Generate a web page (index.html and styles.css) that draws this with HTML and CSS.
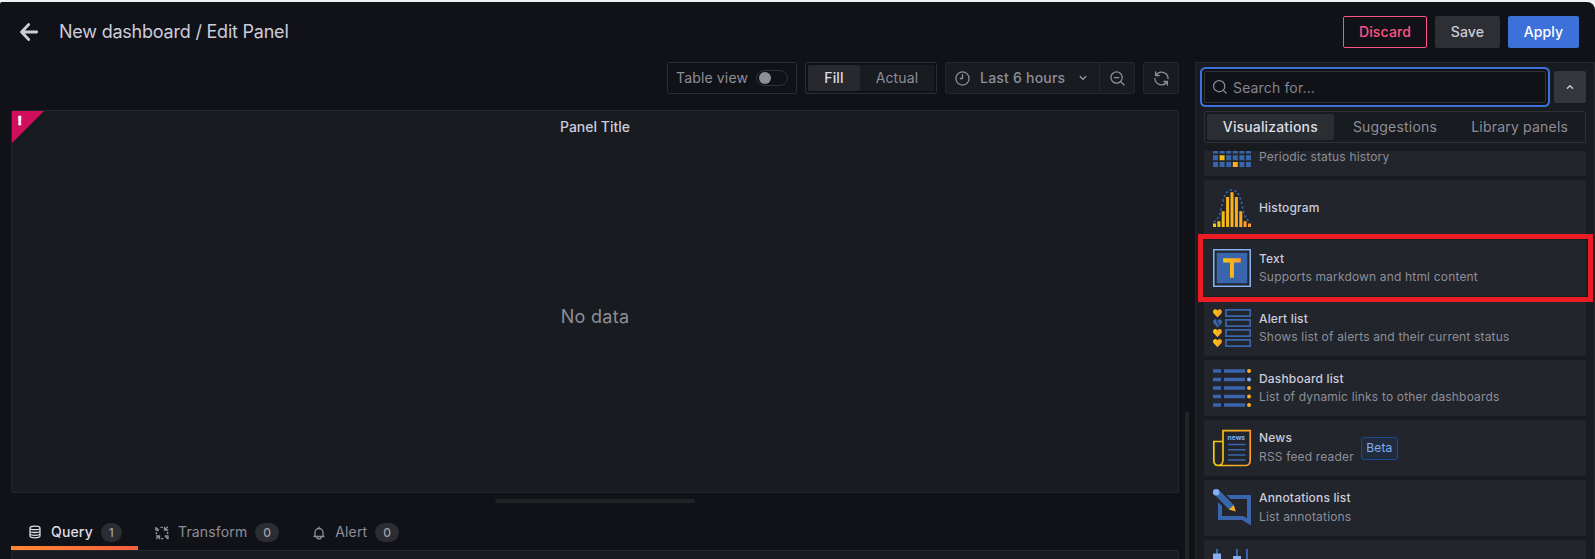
FILE: index.html
```html
<!DOCTYPE html>
<html lang="en">
<head>
<meta charset="utf-8">
<title>New dashboard / Edit Panel</title>
<link rel="stylesheet" href="styles.css">
</head>
<body>
<div class="app">
  <header class="topbar">
    <svg class="back" viewBox="0 0 18 18"><path d="M16.700 9H1.800M8.700 1.600 1.500 9l7.200 7.400"/></svg>
    <h1 class="title">New dashboard / Edit Panel</h1>
    <div class="actions">
      <button class="btn discard">Discard</button>
      <button class="btn save">Save</button>
      <button class="btn apply">Apply</button>
    </div>
  </header>
  <div class="body">
    <main class="main">
      <div class="toolbar">
        <div class="box tableview"><span>Table view</span><span class="switch"></span></div>
        <div class="box radio"><span class="opt on">Fill</span><span class="opt">Actual</span></div>
        <div class="box time">
          <div class="range">
            <svg class="ic" viewBox="0 0 16 16"><circle cx="8" cy="8" r="7"/><path d="M8 4v4H5.600"/></svg>
            <span>Last 6 hours</span>
            <svg class="chev" viewBox="0 0 10 6"><path d="M1.500 1.200 5 4.700l3.500-3.500"/></svg>
          </div>
          <div class="zoomout"><svg class="ic" viewBox="0 0 16 16"><circle cx="7" cy="7" r="6"/><path d="M11.500 11.500 15 15M4.600 7h4.800"/></svg></div>
        </div>
        <div class="box refresh"><svg class="ic" viewBox="0 0 16 16"><path d="M1.700 1v3.800h3.800M2 4.700A7 7 0 0 1 15 8M14.300 15v-3.800h-3.800M14 11.300A7 7 0 0 1 1 8"/></svg></div>
      </div>
      <section class="panel">
        <div class="corner">!</div>
        <div class="ptitle">Panel Title</div>
        <div class="nodata">No data</div>
      </section>
      <div class="handle"></div>
      <nav class="tabs">
        <div class="tab active">
          <svg class="tic" viewBox="0 0 14 14"><path d="M2 3c0-2.400 10-2.400 10 0v8c0 2.400-10 2.400-10 0zM2 3.200c0 2 10 2 10 0M2 6c0 2 10 2 10 0M2 8.800c0 2 10 2 10 0"/></svg>
          <span>Query</span><b class="count">1</b>
        </div>
        <div class="tab">
          <svg class="tic" viewBox="0 0 14 14"><path d="M.8 4.500V1.200M1 1.400l2.800 2.800M1.200 4.300h2.700M9.500.8v3.200h3.700M12.800.8 9.800 3.800M13 9.600v3.600M12.800 12.800l-2.800-2.800M9.700 9.900h3.500M4.500 13.200V10H1M1.200 13l3-3M5.500 1.400h2.300M6 12.600h2.300M1.400 6v2.300M12.600 5.800v2.300"/></svg>
          <span>Transform</span><b class="count">0</b>
        </div>
        <div class="tab">
          <svg class="tic" viewBox="0 0 14 14"><path d="M1.500 10.500h11M3 10.300V6.500a4 4 0 0 1 8 0v3.800M7 2.300V.6M4.800 11c.2 2.600 4.200 2.600 4.400 0"/></svg>
          <span>Alert</span><b class="count">0</b>
        </div>
      </nav>
      <div class="content"></div>
    </main>
    <div class="splitter"><i></i></div>
    <aside class="side">
      <div class="searchrow">
        <div class="search">
          <svg class="sic" viewBox="0 0 14 14"><circle cx="6.200" cy="6.200" r="5.600"/><path d="m10.300 10.300 3.200 3.200"/></svg>
          <span>Search for...</span>
        </div>
        <div class="collapse"><svg class="chev" viewBox="0 0 10 6"><path d="M1.700 4.700 5 1.500l3.300 3.200"/></svg></div>
      </div>
      <div class="vtabs"><span class="vtab on">Visualizations</span><span class="vtab">Suggestions</span><span class="vtab">Library panels</span></div>
      <div class="list">
        <svg width="0" height="0" class="defs"><defs>
          <linearGradient id="gold" gradientUnits="userSpaceOnUse" x1="0" y1="0" x2="38" y2="0"><stop offset="0" stop-color="#f2cc0c"/><stop offset="1" stop-color="#ff9830"/></linearGradient>
          <linearGradient id="warm" x1="0" y1="0" x2="1" y2="0"><stop offset="0" stop-color="#f2cc0c"/><stop offset="1" stop-color="#ff9830"/></linearGradient>
          <path id="heart" d="M4.500 9 .7 5C-.8 3 .6.6 2.500.8 3.600.9 4.100 1.500 4.500 2.200 4.900 1.500 5.400.9 6.500.8 8.400.6 9.800 3 8.300 5z"/>
        </defs></svg>
        <div class="card first">
          <svg class="viz" viewBox="0 0 38 38">
            <path class="blue" d="M0 6h5v5H0zM6.600 6h5v5h-5zM13.200 6h5v5h-5zM19.800 6h5v5h-5zM26.400 6h5v5h-5zM33 6h5v5h-5zM0 12.700h5v5H0zM6.600 12.700h5v5h-5zM13.200 12.700h5v5h-5zM19.800 12.700h5v5h-5zM26.400 12.700h5v5h-5zM33 12.700h5v5h-5zM0 19.400h5v5H0zM6.600 19.400h5v5h-5zM13.200 19.400h5v5h-5zM19.800 19.400h5v5h-5zM26.400 19.400h5v5h-5zM33 19.400h5v5h-5zM0 26.200h5v5H0zM13.200 26.200h5v5h-5zM19.800 26.200h5v5h-5zM26.400 26.200h5v5h-5zM33 26.200h5v5h-5zM0 33h5v5H0zM6.600 33h5v5h-5zM13.200 33h5v5h-5zM26.400 33h5v5h-5zM33 33h5v5h-5z"/>
            <path class="gold" d="M6.600 26.200h5v5h-5zM19.800 33h5v5h-5z"/>
          </svg>
          <div class="txt"><span>Periodic status history</span></div>
        </div>
        <div class="card">
          <svg class="viz" viewBox="0 0 38 38">
            <path class="gold" d="M0 34.500h3V38H0zM4.400 32.300h3V38h-3zM8.700 22.300h3V38h-3zM13.100 8h3v30h-3zM17.500 3.300h3V38h-3zM21.900 8h3v30h-3zM26.300 22.300h3V38h-3zM30.600 32.300h3V38h-3zM35 34.500h3V38h-3z"/>
            <path class="curve" d="M.6 33C8 29 7.500 20 10 12 12 4 15 1 19 1s7 3 9 11c2.500 8 2 17 9.400 21"/>
          </svg>
          <div class="txt"><strong>Histogram</strong></div>
        </div>
        <div class="card marked">
          <svg class="viz" viewBox="0 0 38 38">
            <path fill="none" stroke="#84aff1" stroke-width="1.600" d="M.8.8h36.400v36.400H.8z"/><path class="blue" d="M3.700 3.700h30.600v30.600H3.700z"/><path class="warm" d="M10.200 9.200h17.600v4.300h-6.800v15.300h-4V13.500h-6.800z"/>
          </svg>
          <div class="txt"><strong>Text</strong><span>Supports markdown and html content</span></div>
        </div>
        <div class="card">
          <svg class="viz" viewBox="0 0 38 38">
            <use href="#heart" fill="url(#warm)" y="-.6"/><use href="#heart" fill="#3865ab" y="9.400"/><use href="#heart" fill="url(#warm)" y="19.300"/><use href="#heart" fill="url(#warm)" y="29.200"/>
            <path stroke="#22252b" fill="none" d="m4.500 10.500-.8 2.500 2 1-1 2"/>
            <path fill="none" stroke="#3865ab" stroke-width="1.700" d="M12.900.8h24.300v6.400H12.900zM12.900 10.800h24.300v6.400H12.900zM12.900 20.800h24.300v6.400H12.900zM12.900 30.800h24.300v6.400H12.900z"/>
          </svg>
          <div class="txt"><strong>Alert list</strong><span>Shows list of alerts and their current status</span></div>
        </div>
        <div class="card">
          <svg class="viz" viewBox="0 0 38 38">
            <path class="blue" d="M0 .2h8v3.600H0zM11 .2h21v3.600H11zM0 8.700h8v3.600H0zM11 8.700h21v3.600H11zM0 17.200h8v3.600H0zM11 17.200h21v3.600H11zM0 25.700h8v3.600H0zM11 25.700h21v3.600H11zM0 34.200h8v3.600H0zM11 34.200h21v3.600H11z"/>
            <g fill="#fdb022"><circle cx="36" cy="2" r="2"/><circle cx="36" cy="10.500" r="2" fill="#84aff1"/><circle cx="36" cy="19" r="2"/><circle cx="36" cy="27.500" r="2"/><circle cx="36" cy="36" r="2"/></g>
          </svg>
          <div class="txt"><strong>Dashboard list</strong><span>List of dynamic links to other dashboards</span></div>
        </div>
        <div class="card news">
          <svg class="viz" viewBox="0 0 38 38">
            <path fill="none" stroke="url(#gold)" stroke-width="1.700" d="M10 31.500V1.700h27.200v29.800c0 3-2 5-4.500 5H5c-2.500 0-4.200-2-4.200-5V12.500H10M10 31c0 3-2 5.500-5 5.500"/>
            <path stroke="#3865ab" stroke-width="1.500" d="M15 15.600h17.500M15 20.800h17.500M15 25.900h17.500M15 31h17.500"/>
            <text x="14.600" y="11" textLength="17.500" lengthAdjust="spacingAndGlyphs">news</text>
          </svg>
          <div class="txt spread"><strong>News</strong><span>RSS feed reader</span></div><em class="beta">Beta</em>
        </div>
        <div class="card">
          <svg class="viz" viewBox="0 0 38 38">
            <path class="blue" d="M13.500 6H38v30.500L29 31H5V13l4 4v10h21.500l3.500 2.200V10H17.500z"/>
            <path class="blue" d="m2 6 4.400-4.400 14.400 14.400-4.900 4.500z"/><circle cx="3.200" cy="3.200" r="3.300" fill="#84aff1"/><path class="warm" d="m15.900 20.500 4.900-4.500 2 6.500z"/>
          </svg>
          <div class="txt spread"><strong>Annotations list</strong><span>List annotations</span></div>
        </div>
        <div class="card">
          <svg class="viz" viewBox="0 0 38 38">
            <path class="blue" d="M3 0h2v38H3zM23 0h2v38h-2zM33 0h2v38h-2z"/><path fill="#84aff1" d="M0 4.500h8v20H0zM20 7h8v16h-8z"/>
          </svg>
        </div>
      </div>
    </aside>
  </div>
</div>
</body>
</html>
```
FILE: styles.css
```css
*, *::before, *::after { box-sizing: border-box; }
body { margin: 0; padding-top: 2px; height: 559px; overflow: hidden; background: #f0f2f5; font: 14px/22px Inter, Roboto, sans-serif; letter-spacing: 0.15px; color: #ccccdc; }
svg { flex: none; overflow: visible; }
.app { height: 557px; overflow: hidden; background: #111217; border-radius: 2px 8px 0 0; display: flex; flex-direction: column; }
.topbar { flex: none; height: 60px; display: flex; align-items: center; padding: 0 16px 0 20px; }
.back { width: 18px; height: 18px; fill: none; stroke: #ccccdc; stroke-width: 2.8; stroke-linecap: round; stroke-linejoin: round; }
.title { margin: 0 0 0 21px; font-size: 18px; line-height: 22px; font-weight: 400; letter-spacing: -0.22px; }
.actions { margin-left: auto; display: flex; gap: 8px; }
.btn { height: 32px; padding: 0; border: 0; border-radius: 2px; font: 500 14px/30px Inter, sans-serif; letter-spacing: 0.15px; color: #ccccdc; }
.discard { width: 84px; background: transparent; border: 1px solid #ff5286; color: #ff5286; }
.save { width: 65px; background: #2e2e35; }
.apply { width: 71px; background: #3d71d9; color: #fff; }
.body { flex: 1; min-height: 0; display: flex; }
.main { flex: none; width: 1179px; padding-left: 11px; display: flex; flex-direction: column; }
.toolbar { flex: none; height: 48px; display: flex; justify-content: flex-end; align-items: flex-start; gap: 8px; color: #8e8e99; }
.box { height: 32px; display: flex; align-items: center; border: 1px solid #2c2e34; border-radius: 2px; }
.tableview { width: 130px; padding-left: 8px; gap: 8px; }
.switch { width: 32px; height: 16px; border: 1px solid #303239; border-radius: 8px; padding: 1px 2px; }
.switch::before { content: ""; display: block; width: 12px; height: 12px; border-radius: 6px; background: #8e8e99; }
.radio { width: 132px; padding: 2px; }
.opt { height: 26px; line-height: 26px; flex: 1; text-align: center; background: #181b1f; }
.opt.on { flex: none; width: 52px; background: #28292e; color: #dcdce8; font-weight: 500; border-radius: 2px; }
.time { width: 190px; background: #181b1f; border-color: #25272c; font-weight: 500; }
.range { width: 154px; height: 30px; display: flex; align-items: center; padding-left: 9px; border-right: 1px solid #25272c; }
.range span { margin-left: 10px; width: 85px; letter-spacing: 0.22px; white-space: nowrap; }
.ic { width: 15px; height: 15px; fill: none; stroke: #8e8e99; stroke-width: 1.4; stroke-linecap: round; stroke-linejoin: round; }
.chev { width: 8px; height: 6px; fill: none; stroke: #9b9ba7; stroke-width: 1.7; stroke-linecap: round; stroke-linejoin: round; }
.range .chev { margin-left: 14px; }
.zoomout { flex: 1; display: flex; justify-content: center; }
.refresh { width: 36px; justify-content: center; background: #181b1f; border-color: #25272c; }
.panel { flex: none; position: relative; height: 383px; background: #181b1f; border: 1px solid #25272c; border-radius: 2px; display: flex; flex-direction: column; align-items: center; }
.corner { position: absolute; left: 0; top: 0; width: 32px; height: 32px; padding-left: 5px; background: #d10e5c; clip-path: polygon(0 0, 100% 0, 0 100%); color: #fff; font: 900 12px/20px "DejaVu Sans", sans-serif; -webkit-text-stroke: 0.6px #fff; }
.ptitle { margin-top: 5px; font-weight: 500; letter-spacing: 0; }
.nodata { margin: auto; padding-top: 4px; font-size: 18px; letter-spacing: 0.3px; color: #8e8e99; }
.handle { flex: none; width: 200px; height: 4px; margin: 6px 0 0 484px; background: #202226; border-radius: 4px; }
.tabs { flex: none; height: 47px; padding-top: 12px; display: flex; color: #8e8e99; }
.tab { height: 35px; padding: 0 16px 0 17px; display: flex; align-items: center; }
.tab span { padding-bottom: 1px; }
.tab.active { width: 127px; color: #dcdce8; font-weight: 500; border-bottom: 4px solid; border-image: linear-gradient(90deg, #ff8833, #f55f3e) 1; padding-top: 3px; }
.tic { width: 14px; height: 14px; margin-right: 9px; fill: none; stroke: currentColor; stroke-width: 1.3; }
.count { margin-left: 8px; height: 19px; line-height: 19px; padding: 0 8px; border-radius: 10px; background: #2c2d33; color: #a0a0ac; font-size: 12px; font-weight: 500; }
.content { flex: 1; border: 1px solid #25272c; border-bottom: 0; border-radius: 2px 2px 0 0; background: #181b1f; }
.splitter { flex: none; width: 16px; padding: 349px 0 0 6px; }
.splitter i { display: block; width: 4px; height: 200px; border-radius: 4px; background: #202226; }
.side { flex: none; width: 400px; background: #181b1f; border: 1px solid #25272c; border-bottom: 0; padding: 8px 8px 0; display: flex; flex-direction: column; }
.searchrow { flex: none; display: flex; gap: 8px; }
.search { width: 342px; height: 32px; display: flex; align-items: center; padding-left: 8px; background: #111217; border: 1px solid #303238; border-radius: 2px; box-shadow: 0 0 0 2px #111217, 0 0 0 4px #3d71d9; color: #85858f; }
.search span { padding-top: 2px; }
.sic { width: 14px; height: 14px; margin-right: 6px; fill: none; stroke: #8e8e99; stroke-width: 1.2; }
.collapse { width: 32px; height: 32px; background: #34363c; border-radius: 2px; display: flex; align-items: center; justify-content: center; }
.collapse .chev { stroke: #ccccdc; }
.vtabs { flex: none; height: 32px; margin-top: 8px; padding: 2px; display: flex; border: 1px solid #2f3136; border-radius: 2px; color: #8e8e99; }
.vtab { width: 123px; height: 26px; line-height: 26px; text-align: center; letter-spacing: 0.2px; }
.vtab.on { width: 127px; background: #2a2d31; color: #dcdce8; font-weight: 500; border-radius: 2px; letter-spacing: 0.15px; }
.vtab:last-child { width: 127px; }
.list { margin: 8px -8px 0; padding: 0 8px; height: 408px; overflow: clip; display: flex; flex-direction: column; gap: 4px; }
.defs { position: absolute; }
.card { flex: none; position: relative; height: 56px; display: flex; align-items: center; padding: 0 9px; background: #22252b; border-radius: 2px; }
.first { margin-top: -31px; }
.first .txt { padding-top: 18px; }
.viz { width: 38px; height: 38px; margin-right: 8px; }
.txt { display: flex; flex-direction: column; font-size: 12px; line-height: 18px; letter-spacing: 0.17px; color: #8e8e99; white-space: nowrap; }
.txt strong { font-weight: 500; color: #ccccdc; }
.spread strong { margin-bottom: 1px; }
.spread { padding-bottom: 1px; }
.marked::after { content: ""; position: absolute; z-index: 2; left: -6px; top: -6px; width: 395px; height: 68px; border: 5px solid #ed1c24; }
.beta { margin-left: 7px; width: 37px; height: 23px; border: 1px solid #164a94; border-radius: 3px; background: #202b3d; color: #84aff1; font-style: normal; font-size: 12px; line-height: 20px; text-align: center; }
.blue { fill: #3865ab; }
.gold { fill: url(#gold); }
.warm { fill: url(#warm); }
.curve { fill: none; stroke: #3865ab; stroke-width: 1.6; stroke-dasharray: 2.3 2.3; }
.news text { font: 700 6px Inter, sans-serif; fill: #84aff1; letter-spacing: 0; }
```
